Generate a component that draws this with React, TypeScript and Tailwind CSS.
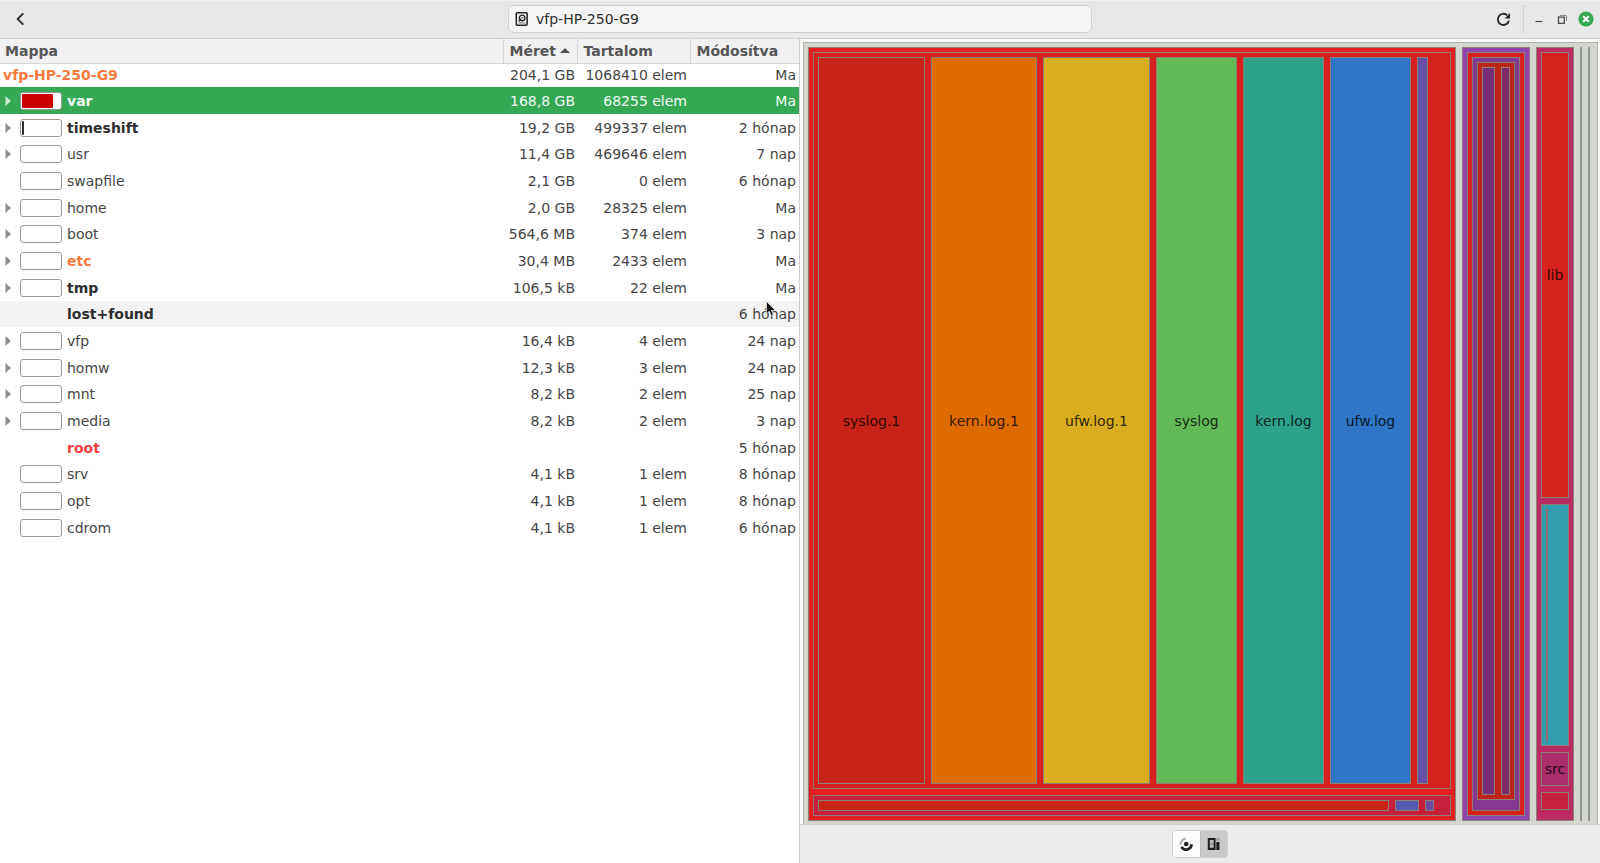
import clsx from "clsx";

type Folder = {
  name: string;
  size?: string;
  items?: string;
  modified: string;
  expandable?: boolean;
  bar?: number;
  tone?: "bold" | "orange" | "red";
  state?: "selected" | "hover";
};

type Block = {
  weight: number;
  color?: string;
  label?: string;
  rows?: boolean;
  line?: boolean;
  children?: Block[];
};

const FOLDERS: Folder[] = [
  { name: "var", size: "168,8 GB", items: "68255 elem", modified: "Ma", expandable: true, bar: 82, tone: "bold", state: "selected" },
  { name: "timeshift", size: "19,2 GB", items: "499337 elem", modified: "2 hónap", expandable: true, bar: 4, tone: "bold" },
  { name: "usr", size: "11,4 GB", items: "469646 elem", modified: "7 nap", expandable: true, bar: 0 },
  { name: "swapfile", size: "2,1 GB", items: "0 elem", modified: "6 hónap", bar: 0 },
  { name: "home", size: "2,0 GB", items: "28325 elem", modified: "Ma", expandable: true, bar: 0 },
  { name: "boot", size: "564,6 MB", items: "374 elem", modified: "3 nap", expandable: true, bar: 0 },
  { name: "etc", size: "30,4 MB", items: "2433 elem", modified: "Ma", expandable: true, bar: 0, tone: "orange" },
  { name: "tmp", size: "106,5 kB", items: "22 elem", modified: "Ma", expandable: true, bar: 0, tone: "bold" },
  { name: "lost+found", modified: "6 hónap", tone: "bold", state: "hover" },
  { name: "vfp", size: "16,4 kB", items: "4 elem", modified: "24 nap", expandable: true, bar: 0 },
  { name: "homw", size: "12,3 kB", items: "3 elem", modified: "24 nap", expandable: true, bar: 0 },
  { name: "mnt", size: "8,2 kB", items: "2 elem", modified: "25 nap", expandable: true, bar: 0 },
  { name: "media", size: "8,2 kB", items: "2 elem", modified: "3 nap", expandable: true, bar: 0 },
  { name: "root", modified: "5 hónap", tone: "red" },
  { name: "srv", size: "4,1 kB", items: "1 elem", modified: "8 hónap", bar: 0 },
  { name: "opt", size: "4,1 kB", items: "1 elem", modified: "8 hónap", bar: 0 },
  { name: "cdrom", size: "4,1 kB", items: "1 elem", modified: "6 hónap", bar: 0 },
];

// Blocks without a color are free space at the end of a row or column.
const TREEMAP: Block[] = [
  {
    weight: 648,
    color: "#e12121",
    rows: true,
    children: [
      {
        weight: 737,
        color: "#d5221e",
        children: [
          { weight: 107, color: "#c8231b", label: "syslog.1" },
          { weight: 106, color: "#df6b00", label: "kern.log.1" },
          { weight: 107, color: "#d9ad20", label: "ufw.log.1" },
          { weight: 81, color: "#63b858", label: "syslog" },
          { weight: 81, color: "#2da189", label: "kern.log" },
          { weight: 81, color: "#2f76c7", label: "ufw.log" },
          { weight: 11, color: "#6650a8" },
          { weight: 12 },
        ],
      },
      {
        weight: 21,
        color: "#c6203a",
        children: [
          { weight: 571, color: "#c9241a" },
          { weight: 24, color: "#555ab2" },
          { weight: 9, color: "#6c4ba4" },
          { weight: 6 },
        ],
      },
    ],
  },
  {
    weight: 68,
    color: "#8e43ad",
    children: [
      {
        weight: 1,
        color: "#d6221e",
        children: [
          {
            weight: 1,
            color: "#83398f",
            rows: true,
            children: [
              {
                weight: 1,
                color: "#bd2418",
                children: [
                  { weight: 13, color: "#762e76" },
                  { weight: 9, color: "#7c2a66" },
                ],
              },
              { weight: 0 },
            ],
          },
        ],
      },
    ],
  },
  {
    weight: 38,
    color: "#bb2c63",
    rows: true,
    children: [
      { weight: 446, color: "#d6221e", label: "lib" },
      {
        weight: 242,
        color: "#319daf",
        children: [{ weight: 2, line: true }, { weight: 10 }],
      },
      { weight: 34, color: "#a92d68", label: "src" },
      { weight: 18, color: "#c6203f" },
      { weight: 0 },
    ],
  },
  { weight: 2, line: true, color: "#909490" },
  { weight: 2, line: true, color: "#909490" },
  { weight: 1 },
];

const TONES = {
  bold: "font-bold text-[#2e2e2e]",
  orange: "font-bold text-[#f57c3e]",
  red: "font-bold text-[#fa4141]",
};

function tracks(blocks: Block[]) {
  return blocks.map((block) => `minmax(0, ${block.weight}fr)`).join(" ");
}

function MapBlock({ block }: { block: Block }) {
  if (block.line) return <div style={{ backgroundColor: block.color ?? "#97696c" }} />;
  if (!block.color) return <div />;

  if (block.children) {
    const template = tracks(block.children);
    return (
      <div
        className="grid min-h-0 min-w-0 gap-1.5 border border-[#8f7f77] p-1"
        style={{
          backgroundColor: block.color,
          ...(block.rows ? { gridTemplateRows: template } : { gridTemplateColumns: template }),
        }}
      >
        {block.children.map((child, i) => (
          <MapBlock key={i} block={child} />
        ))}
      </div>
    );
  }

  return (
    <div
      className="flex min-h-0 min-w-0 items-center justify-center overflow-hidden border border-[#8f7f77] text-black/80"
      style={{ backgroundColor: block.color }}
    >
      {block.label}
    </div>
  );
}

function HeaderBar() {
  return (
    <header className="flex h-[39px] items-center border-t border-b border-t-[#f0f0f0] border-b-[#cdcdcd] bg-[#e8e8e8] pb-px">
      <div className="flex flex-1 items-center">
        <button type="button" aria-label="Vissza" className="ml-3 flex size-4 items-center justify-center">
          <svg viewBox="0 0 16 16" className="size-4" fill="none" stroke="#2e2e2e" strokeWidth="1.9">
            <path d="M11.3 2.4 5.6 8l5.7 5.6" />
          </svg>
        </button>
      </div>
      <div className="flex h-7 w-[584px] items-center rounded-md border border-[#d0d0d0] bg-[#f5f5f5] px-1.5">
        <button type="button" className="flex items-center gap-[7px] text-[#2e2e2e]">
          <svg viewBox="0 0 14 14" className="size-3.5" fill="none" stroke="#262626">
            <rect x="1.3" y=".8" width="10.8" height="12.400" rx="1" strokeWidth="1.6" />
            <circle cx="7.1" cy="5.9" r="2.8" strokeWidth="1.4" />
            <circle cx="7.1" cy="5.7" r=".8" fill="#262626" stroke="none" />
            <path d="M3.8 9.2 6 6.8" strokeWidth="1.5" />
            <path d="M3.4 11h6.800" strokeWidth=".6" />
          </svg>
          vfp-HP-250-G9
        </button>
      </div>
      <div className="flex flex-1 items-center justify-end">
        <button type="button" aria-label="Frissítés" className="mr-3">
          <svg viewBox="0 0 16 16" className="size-4" fill="none" stroke="#262626" strokeWidth="1.9">
            <path d="M13.9 9.8A5.600 5.600 0 1 1 12.400 4.400" />
            <path d="M15 2v5.600H9.500l2.200-2.100 1.300-1.300z" fill="#262626" stroke="none" />
          </svg>
        </button>
        <span className="h-7 w-px bg-[#cfcfcf]" />
        <div className="mr-1.5 ml-1.5 flex items-center gap-2">
          <button type="button" aria-label="Kis méret">
            <svg viewBox="0 0 16 16" className="size-4" stroke="#4a4a4a" strokeWidth="1.2">
              <path d="M5.500 10.500h7" />
            </svg>
          </button>
          <button type="button" aria-label="Előző méret">
            <svg viewBox="0 0 16 16" className="size-4" fill="none" stroke="#4a4a4a">
              <path d="M6 4.500h6.500V10" stroke="#777" strokeWidth=".9" />
              <rect x="4.500" y="6.100" width="5.800" height="6.200" strokeWidth="1.3" />
            </svg>
          </button>
          <button type="button" aria-label="Bezárás">
            <svg viewBox="0 0 16 16" className="size-4">
              <circle cx="8" cy="8" r="7.600" fill="#35a854" />
              <path d="m5.200 5.200 5.600 5.600m0-5.600-5.600 5.600" stroke="#fff" strokeWidth="2.100" />
            </svg>
          </button>
        </div>
      </div>
    </header>
  );
}

function UsageBar({ value }: { value: number }) {
  return (
    <span className="flex h-[18px] w-[42px] rounded-[3px] border border-[#999] bg-white p-px">
      {value > 0 && (
        <span
          className={clsx("rounded-[1px]", value > 50 ? "bg-[#cc0000]" : "bg-[#2e2e2e]")}
          style={{ width: `${value}%` }}
        />
      )}
    </span>
  );
}

function Pointer() {
  return (
    <svg viewBox="0 0 11 16" className="absolute top-0 right-[22px] h-4 w-[11px]" aria-hidden="true">
      <path
        d="M.5.5v12.2l2.8-2.5 2 4.6 2-.9-2-4.4h4z"
        fill="#111"
        stroke="#e8e8e8"
        strokeWidth=".7"
      />
    </svg>
  );
}

function FolderRow({ folder }: { folder: Folder }) {
  const selected = folder.state === "selected";
  return (
    <tr
      className={clsx(
        "h-[27px] nth-[3n+1]:h-[26px]",
        selected && "bg-[#35a854] text-[#f0faf2]",
        folder.state === "hover" && "bg-[#f3f3f3]",
      )}
    >
      <td className="p-0">
        <div className="flex items-center pl-[5px]">
          <span className="flex w-[15px]">
            {folder.expandable && (
              <button type="button" aria-label={`${folder.name} kibontása`}>
                <svg
                  viewBox="0 0 6 10"
                  className={clsx("h-2.5 w-1.5", selected ? "fill-[#c9ecd2]" : "fill-[#8e8e8e]")}
                >
                  <path d="M.5 0 6 5 .5 10z" />
                </svg>
              </button>
            )}
          </span>
          <span className="mr-[5px] w-[42px]">
            {folder.bar !== undefined && <UsageBar value={folder.bar} />}
          </span>
          <span className={clsx(selected ? "font-bold" : folder.tone && TONES[folder.tone])}>{folder.name}</span>
        </div>
      </td>
      <td className="py-0 pr-0.5 pl-0 text-right">{folder.size}</td>
      <td className="py-0 pr-[3px] pl-0 text-right">{folder.items}</td>
      <td className="relative py-0 pr-[3px] pl-0 text-right">
        {folder.modified}
        {folder.state === "hover" && <Pointer />}
      </td>
    </tr>
  );
}

function FolderTable() {
  return (
    <table className="w-full table-fixed border-collapse whitespace-nowrap text-[#454545]">
      <colgroup>
        <col />
        <col className="w-[74px]" />
        <col className="w-[113px]" />
        <col className="w-[109px]" />
      </colgroup>
      <thead>
        <tr className="h-6 bg-[#f1f1f1] text-left text-[#555]">
          <th className="border-r border-b border-[#d6d6d6] py-0 pr-0 pl-[5px]">Mappa</th>
          <th className="border-r border-b border-[#d6d6d6] py-0 pr-0 pl-1.5" aria-sort="ascending">
            <div className="flex items-center gap-1">
              Méret
              <svg viewBox="0 0 10 5" className="h-[5px] w-2.5 fill-[#555]">
                <path d="M0 5 5 0l5 5z" />
              </svg>
            </div>
          </th>
          <th className="border-r border-b border-[#d6d6d6] py-0 pr-0 pl-1.5">Tartalom</th>
          <th className="border-b border-[#d6d6d6] py-0 pr-0 pl-1.5">Módosítva</th>
        </tr>
      </thead>
      <tbody>
        <tr className="h-6">
          <td className="py-0 pr-0 pl-[3px] font-bold text-[#f57c3e]">vfp-HP-250-G9</td>
          <td className="py-0 pr-0.5 pl-0 text-right">204,1 GB</td>
          <td className="py-0 pr-[3px] pl-0 text-right">1068410 elem</td>
          <td className="py-0 pr-[3px] pl-0 text-right">Ma</td>
        </tr>
        {FOLDERS.map((folder) => (
          <FolderRow key={folder.name} folder={folder} />
        ))}
      </tbody>
    </table>
  );
}

function ChartSwitcher() {
  return (
    <div className="flex h-[39px] items-center justify-center border-t border-[#d2d2d2] bg-[#ececec]">
      <div className="flex h-7 w-14 overflow-hidden rounded-[4px] border border-[#cfcfcf]">
        <button type="button" aria-label="Gyűrűdiagram" className="flex flex-1 items-center justify-center bg-[#fcfcfc]">
          <svg viewBox="0 0 14 14" className="size-3.5" fill="none">
            <path d="M1.900 8A5.200 5.200 0 0 1 6.800 1.600" stroke="#b3b3b3" strokeWidth="2.200" />
            <circle cx="7.200" cy="7" r="2.300" fill="#222" />
            <path d="M12.400 7.300A5.300 5.300 0 0 1 2.500 9.900" stroke="#222" strokeWidth="2.800" />
          </svg>
        </button>
        <button
          type="button"
          aria-label="Fatérkép"
          aria-pressed="true"
          className="flex flex-1 items-center justify-center border-l border-[#bdbdbd] bg-[#c9c9c9]"
        >
          <svg viewBox="0 0 14 14" className="size-3.5">
            <path d="M.8 1h7.800v12H.8z" fill="#1c1c1c" />
            <path d="M2.800 3h3.800v7.800H2.800z" fill="#c0c0c0" />
            <path d="M3.400 5.400h2.400v3H3.400z" fill="#959595" />
            <path d="M9.300 1.200h3.200v2.600H9.300z" fill="#999" />
            <path d="M9.300 5h3.200v8H9.300z" fill="#1c1c1c" />
          </svg>
        </button>
      </div>
    </div>
  );
}

export default function App() {
  return (
    <div className="flex min-h-screen flex-col bg-white font-['DejaVu_Sans',sans-serif] text-sm leading-5">
      <HeaderBar />
      <main className="flex flex-1">
        <section className="w-1/2 border-r border-[#cdcdcd]">
          <FolderTable />
        </section>
        <section className="flex w-1/2 flex-col bg-[#f8f8f8]">
          <div className="flex flex-1 pt-[3px] pr-0.5 pl-[3px]">
            <div
              className="grid flex-1 gap-1.5 border border-b-0 border-[#b0b3ae] bg-[#d3d7d0] pt-1 pb-[3px] pl-1"
              style={{ gridTemplateColumns: tracks(TREEMAP) }}
            >
              {TREEMAP.map((block, i) => (
                <MapBlock key={i} block={block} />
              ))}
            </div>
          </div>
          <ChartSwitcher />
        </section>
      </main>
    </div>
  );
}
